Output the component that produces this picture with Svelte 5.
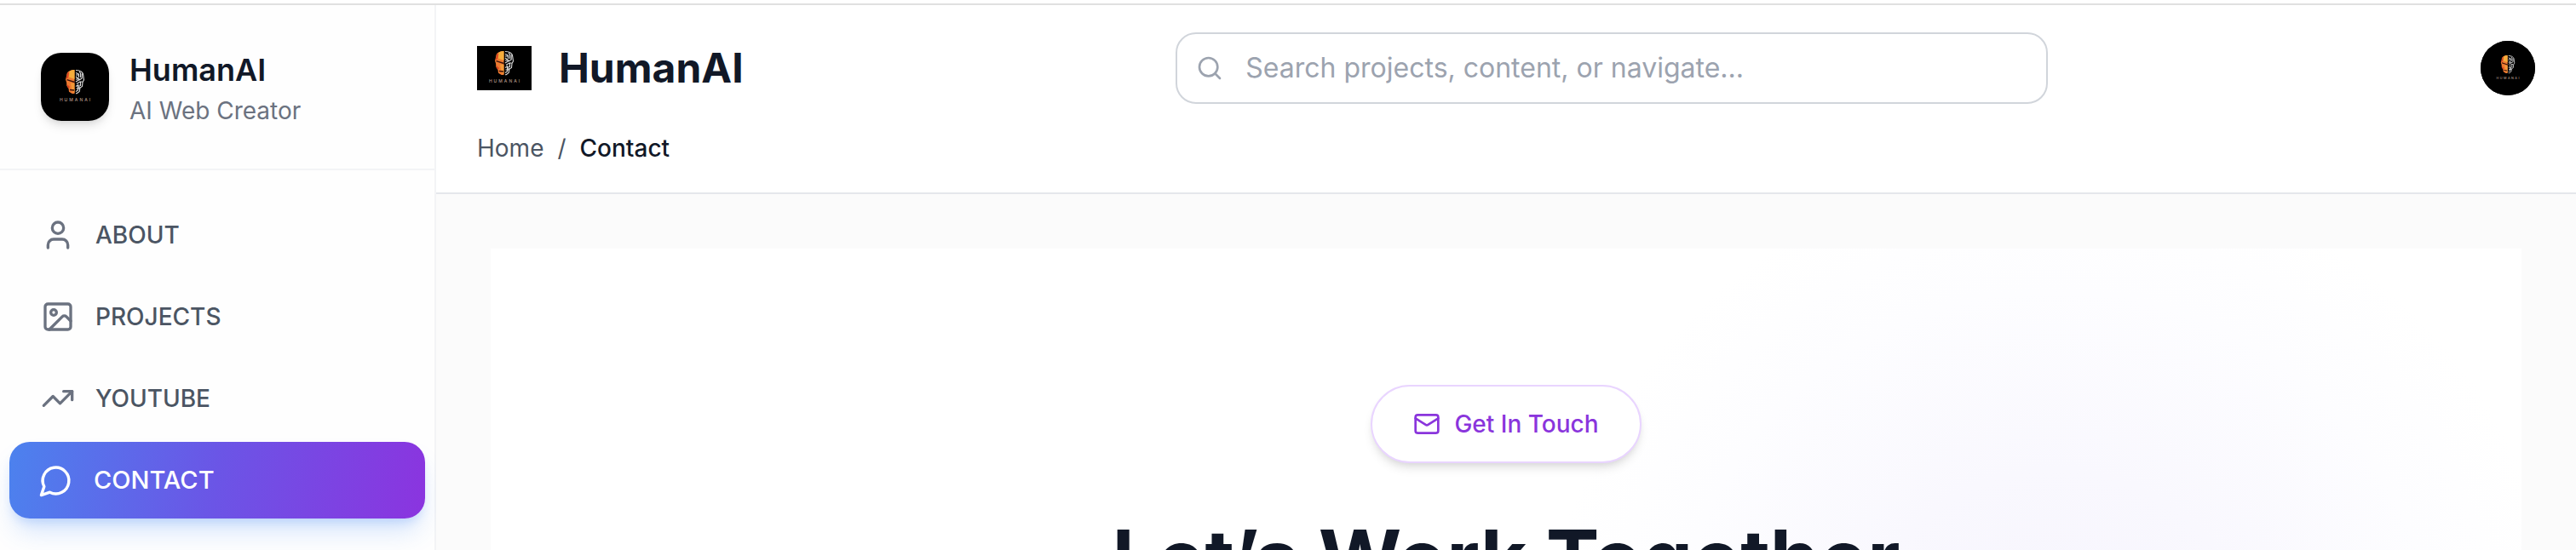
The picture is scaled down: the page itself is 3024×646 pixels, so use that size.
<script>
  const links = [
    { label: 'ABOUT', icon: 'user' },
    { label: 'PROJECTS', icon: 'image' },
    { label: 'YOUTUBE', icon: 'trend' },
    { label: 'CONTACT', icon: 'chat', active: true }
  ];
</script>

{#snippet logo(viewBox, cls)}
  <svg class={cls} {viewBox} role="img" aria-label="HumanAI logo">
    <rect x="-20" y="-20" width="110" height="110" fill="#000" />
    <path d="M31.5 6C26 6 22.3 8.2 22.2 12.5L21 17.5l1.1 3.2.2 4 2.200 3.3.5 3.800 3.700 2.200h2.800Z" fill="#ee7a30" />
    <path d="M31.5 6c-3 0-5 .8-6 2l-.5 6.500 6.500 2.500Z" fill="#f5ae3c" />
    <path d="M27 21.500 31.500 22v11l-2.500-2-1-4Z" fill="#f39a38" />
    <path d="M23.600 9 21.500 17l2.500-2 1-6ZM22.500 23l1.500 5 2-2Z" fill="#d9401f" />
    <path d="M22.500 17.600 31.500 20.500M26 29.500l5 .500" stroke="#3a1008" stroke-width="1.400" fill="none" />
    <path d="M33 6.500c5 0 8.600 2 8.800 6.200l.700 5.300-1.500 2.500-.500 5-2.500 1.500-.800 4.500-3 2.200H33M33 9.500l3.500 1.500v4M37 8l1.500 2v5M40.200 10.500v5.500l-3.200 2M33 14l4.500 3.500L33 20M34 22.500l4-2.500h2.500M38.500 20v5M33 25.500l2.500-1.500v6l-2.500 1.500M37 23.500v5M33 12h3M33 17h3M33.500 28h3.500" fill="none" stroke="#dedede" stroke-width="1.100" />
    <text x="33" y="43" text-anchor="middle">HUMANAI</text>
  </svg>
{/snippet}

<div class="page">
  <aside>
    <div class="brand">
      {@render logo('-8 -14 80 80', 'tile')}
      <div>
        <div class="name">HumanAI</div>
        <div class="role">AI Web Creator</div>
      </div>
    </div>
    <nav class="menu" aria-label="Main">
      {#each links as link}
        <a href="#{link.label.toLowerCase()}" class:active={link.active}>
          <svg class="icon" viewBox="0 0 24 24">
            {#if link.icon === 'user'}
              <path d="M19 21v-2a4 4 0 0 0-4-4H9a4 4 0 0 0-4 4v2" /><circle cx="12" cy="7" r="4" />
            {:else if link.icon === 'image'}
              <rect x="3" y="3" width="18" height="18" rx="2" /><circle cx="9" cy="9" r="2" /><path d="m21 15-3.086-3.086a2 2 0 0 0-2.828 0L6 21" />
            {:else if link.icon === 'trend'}
              <path d="M22 7 13.500 15.500l-5-5L2 17" /><path d="M16 7h6v6" />
            {:else}
              <path d="M7.900 20A9 9 0 1 0 4 16.100L2 22Z" />
            {/if}
          </svg>
          <span>{link.label}</span>
        </a>
      {/each}
    </nav>
  </aside>

  <div class="content">
    <header>
      <div class="bar">
        <a class="home" href="#home">
          {@render logo('0 0 64 52', 'mark')}
          <span>HumanAI</span>
        </a>
        <label class="search">
          <svg class="icon" viewBox="0 0 24 24"><circle cx="11" cy="11" r="8" /><path d="m21 21-4.300-4.300" /></svg>
          <input type="search" aria-label="Search" placeholder="Search projects, content, or navigate..." />
        </label>
        <button class="avatar" aria-label="Account">{@render logo('-11 -17 86 86', 'face')}</button>
      </div>
      <nav class="crumbs" aria-label="Breadcrumb">
        <a href="#home">Home</a><span>/</span><span class="current">Contact</span>
      </nav>
    </header>
    <main>
      <section class="hero">
        <div class="pill">
          <svg class="icon" viewBox="0 0 24 24"><rect x="2" y="4" width="20" height="16" rx="2" /><path d="m22 7-8.970 5.700a1.940 1.940 0 0 1-2.060 0L2 7" /></svg>
          <span>Get In Touch</span>
        </div>
        <h1>Let’s Work Together</h1>
      </section>
    </main>
  </div>
</div>

<style>
  :global(body) { margin: 0; overflow: hidden; }
  * { box-sizing: border-box; }
  .page {
    display: flex;
    height: 100vh;
    overflow: hidden;
    padding-top: 4px;
    background: #fff;
    color: #111827;
    font-family: Inter, sans-serif;
    font-size: 28px;
    line-height: 40px;
  }
  a { color: inherit; text-decoration: none; }
  .icon {
    flex: none;
    fill: none;
    stroke: currentColor;
    stroke-width: 2;
    stroke-linecap: round;
    stroke-linejoin: round;
  }
  svg text { fill: #b3988a; font: 500 5px Inter, sans-serif; letter-spacing: 2px; }

  aside {
    flex: none;
    width: 512px;
    border-top: 2px solid #e0e0e0;
    background: linear-gradient(#f3f4f6, #f3f4f6) right / 2px 100% no-repeat #fefefe;
    padding-right: 2px;
  }
  .brand {
    display: flex;
    align-items: center;
    gap: 24px;
    padding: 48px;
    border-bottom: 2px solid #f3f4f6;
  }
  .tile {
    width: 80px;
    height: 80px;
    border-radius: 24px;
    box-shadow: 0 8px 12px -2px rgb(0 0 0 / 10%), 0 4px 8px -4px rgb(0 0 0 / 10%);
  }
  .name { font-size: 36px; font-weight: 600; line-height: 56px; }
  .role { color: #6b7280; }
  .menu { display: flex; flex-direction: column; gap: 8px; padding: 32px 16px; }
  .menu a {
    display: flex;
    align-items: center;
    gap: 24px;
    height: 88px;
    padding: 0 32px;
    border-radius: 24px;
    color: #4b5563;
    font-weight: 500;
  }
  .menu .icon { width: 40px; height: 40px; color: #6b7280; }
  .menu .active {
    height: 90px;
    margin: -1px -5px;
    padding: 0 34px;
    background: linear-gradient(100deg, #4c82ee, #6b55e6 50%, #8b34df);
    color: #fff;
    font-size: 29px;
    box-shadow: 0 20px 30px -6px rgb(59 130 246 / 22%), 0 8px 12px -4px rgb(59 130 246 / 20%);
  }
  .menu .active .icon { width: 41px; height: 41px; color: #fff; }

  .content { display: flex; flex: 1; flex-direction: column; min-width: 0; }
  header {
    flex: none;
    display: flex;
    flex-direction: column;
    gap: 32px;
    padding: 32px 48px;
    border-top: 2px solid #e0e0e0;
    border-bottom: 2px solid #e5e7eb;
  }
  .bar { display: flex; align-items: center; justify-content: space-between; }
  .home { display: flex; align-items: center; gap: 32px; font-size: 48px; font-weight: 700; line-height: 64px; }
  .mark { width: 64px; height: 52px; }
  .search {
    display: flex;
    align-items: center;
    gap: 26px;
    width: 1024px;
    height: 84px;
    padding: 0 22px;
    border: 2px solid #d1d5db;
    border-radius: 24px;
    color: #9ca3af;
  }
  .search .icon, .pill .icon { width: 32px; height: 32px; }
  input {
    flex: 1;
    min-width: 0;
    padding: 0;
    border: 0;
    outline: 0;
    background: none;
    color: #111827;
    font: 400 32px/48px Inter, sans-serif;
  }
  input::placeholder { color: #9ca3af; }
  .avatar {
    width: 64px;
    height: 64px;
    padding: 0;
    overflow: hidden;
    border: 0;
    border-radius: 50%;
    background: #000;
  }
  .face { display: block; width: 64px; height: 64px; }
  .crumbs { display: flex; gap: 16px; color: #4b5563; }
  .current { color: #111827; font-weight: 500; }

  main { flex: 1; min-height: 0; padding: 64px 64px 0; background: #fbfbfb; }
  .hero {
    display: flex;
    flex-direction: column;
    align-items: center;
    gap: 48px;
    height: 100%;
    overflow: hidden;
    padding-top: 160px;
    background: radial-gradient(circle 600px at 77% 500px, #f6f4fd, #f9f8fe 40%, #fdfdff 75%, #fff) #fff;
  }
  .pill {
    display: flex;
    flex: none;
    align-items: center;
    gap: 16px;
    padding: 24px 48px;
    border: 2px solid #e9d5ff;
    border-radius: 46px;
    background: #fff;
    color: #8a35dc;
    font-weight: 500;
    box-shadow: 0 8px 12px -2px rgb(0 0 0 / 10%), 0 4px 8px -4px rgb(0 0 0 / 10%);
  }
  h1 { flex: none; margin: 0; font-size: 94px; font-weight: 700; line-height: 128px; }
</style>
